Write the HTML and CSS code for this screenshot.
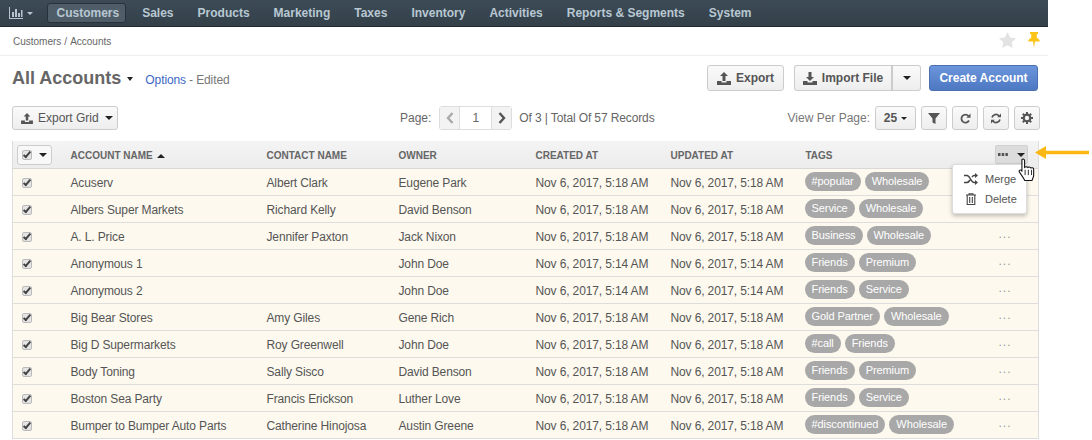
FILE: index.html
```html
<!DOCTYPE html>
<html lang="en" dir="ltr">
  <head>
    <meta charset="utf-8">
    <title>All Accounts</title>
    <link rel="stylesheet" href="styles.css">
  </head>
  <body>
    <div class="page">
      <nav class="topnav">
        <a class="nav-chart">
          <svg width="14" height="12" viewBox="0 0 14 12"><path d="M0 0h1v11h13v1H0zM3 5h2v5H3zM6 2h2v8H6zM9 6h2v4H9zM12 3h1.500v7H12z" fill="#b5c4d0"/></svg>
          <i class="caret caret-nav"></i>
        </a>
        <a class="nav-item active">Customers</a>
        <a class="nav-item">Sales</a>
        <a class="nav-item">Products</a>
        <a class="nav-item">Marketing</a>
        <a class="nav-item">Taxes</a>
        <a class="nav-item">Inventory</a>
        <a class="nav-item">Activities</a>
        <a class="nav-item">Reports &amp; Segments</a>
        <a class="nav-item">System</a>
      </nav>

      <div class="crumbs">
        <div class="crumb-text"><span>Customers</span><span>/</span><span>Accounts</span></div>
        <div class="crumb-icons">
          <svg width="17" height="16" viewBox="0 0 17 16"><path d="M8.500 0l2.600 5.400 5.900.8-4.300 4.100 1 5.700-5.200-2.800-5.200 2.800 1-5.700L0 6.200l5.900-.8z" fill="#e3e3e3"/></svg>
          <svg width="12" height="16" viewBox="0 0 12 16"><path d="M2 0h8v2H8.800v4c1.600.5 3 1.500 3 3.500H7L6 16 5 9.500H.2c0-2 1.400-3 3-3.500V2H2z" fill="#fcc419"/></svg>
        </div>
      </div>

      <div class="titlebar">
        <div class="title-left">
          <h1>All Accounts</h1>
          <i class="caret caret-title"></i>
          <a class="options">Options</a>
          <span class="edited">- Edited</span>
        </div>
        <div class="title-right">
          <button class="btn btn-export">
            <svg class="ico" width="14" height="13" viewBox="0 0 14 13"><path d="M7 0l4 4H8.500v5h-3V4H3zM0 9h4.500v1.500h5V9H14v4H0z" fill="#555"/></svg>
            Export
          </button>
          <div class="btn-group">
            <button class="btn btn-import">
              <svg class="ico" width="14" height="13" viewBox="0 0 14 13"><path d="M5.500 0h3v5H11L7 9 3 5h2.500zM0 9h4.500v1.500h5V9H14v4H0z" fill="#555"/></svg>
              Import File
            </button>
            <button class="btn btn-split"><i class="caret"></i></button>
          </div>
          <button class="btn btn-primary">Create Account</button>
        </div>
      </div>

      <div class="toolbar">
        <button class="btn btn-small btn-grid">
          <svg class="ico" width="12" height="11" viewBox="0 0 14 13"><path d="M7 0l4 4H8.500v5h-3V4H3zM0 9h4.500v1.500h5V9H14v4H0z" fill="#555"/></svg>
          Export Grid
          <i class="caret caret-grid"></i>
        </button>
        <div class="pager">
          <span>Page:</span>
          <div class="pager-box">
            <span class="pager-arrow">
              <svg width="8" height="12" viewBox="0 0 8 12"><path d="M6.500 1L2 6l4.500 5" fill="none" stroke="#aaa" stroke-width="2.400"/></svg>
            </span>
            <span class="pager-num">1</span>
            <span class="pager-arrow">
              <svg width="8" height="12" viewBox="0 0 8 12"><path d="M1.500 1L6 6l-4.500 5" fill="none" stroke="#555" stroke-width="2.400"/></svg>
            </span>
          </div>
          <span class="pager-total">Of 3 | Total Of 57 Records</span>
        </div>
        <div class="view-tools">
          <span class="view-label">View Per Page:</span>
          <button class="btn btn-small btn-per"><b>25</b><i class="caret caret-small"></i></button>
          <button class="btn btn-small btn-icon">
            <svg width="12" height="11" viewBox="0 0 12 11"><path d="M0 0h12L7.500 5.500V11l-3-1.500v-4z" fill="#555"/></svg>
          </button>
          <button class="btn btn-small btn-icon">
            <svg width="11" height="11" viewBox="0 0 11 11"><path d="M9 7.500A4 4 0 1 1 8.500 3" fill="none" stroke="#555" stroke-width="1.800"/><path d="M10.500 .5v4.200H6.300z" fill="#555"/></svg>
          </button>
          <button class="btn btn-small btn-icon">
            <svg width="12" height="11" viewBox="0 0 12 11"><path d="M2 4.500A4 4 0 0 1 9 3M10 6.500A4 4 0 0 1 3 8" fill="none" stroke="#555" stroke-width="1.700"/><path d="M11 .5v3.800H7.200zM1 10.500V6.700h3.800z" fill="#555"/></svg>
          </button>
          <button class="btn btn-small btn-icon">
            <svg width="12" height="12" viewBox="0 0 12 12"><circle cx="6" cy="6" r="3.300" fill="none" stroke="#555" stroke-width="2.200"/><path d="M6 0v2.500M6 9.500V12M0 6h2.500M9.500 6H12M1.800 1.800l1.800 1.800M8.400 8.400l1.800 1.800M1.800 10.200l1.800-1.800M8.400 3.600l1.800-1.800" stroke="#555" stroke-width="2"/></svg>
          </button>
        </div>
      </div>

      <div class="grid-wrap">
        <table class="grid">
          <colgroup>
            <col class="c-check"><col class="c-name"><col class="c-contact"><col class="c-owner">
            <col class="c-date"><col class="c-date"><col class="c-tags"><col class="c-more">
          </colgroup>
          <thead>
            <tr>
              <th class="check-cell">
                <span class="check-head"><span class="check"></span><i class="caret"></i></span>
              </th>
              <th>ACCOUNT NAME <i class="caret caret-up"></i></th>
              <th>CONTACT NAME</th>
              <th>OWNER</th>
              <th>CREATED AT</th>
              <th>UPDATED AT</th>
              <th>TAGS</th>
              <th class="more-cell">
                <span class="more-btn">
                  <svg width="10" height="3" viewBox="0 0 10 3"><path d="M0 0h2.500v3H0zM3.700 0h2.500v3H3.700zM7.400 0h2.500v3H7.400z" fill="#555"/></svg>
                  <i class="caret"></i>
                </span>
              </th>
            </tr>
          </thead>
          <tbody>
            <tr><td class="check-cell"><span class="check"></span></td><td>Acuserv</td><td>Albert Clark</td><td>Eugene Park</td><td>Nov 6, 2017, 5:18 AM</td><td>Nov 6, 2017, 5:18 AM</td><td class="tags"><span class="tag">#popular</span><span class="tag">Wholesale</span></td><td class="dots"></td></tr>
            <tr><td class="check-cell"><span class="check"></span></td><td>Albers Super Markets</td><td>Richard Kelly</td><td>David Benson</td><td>Nov 6, 2017, 5:18 AM</td><td>Nov 6, 2017, 5:18 AM</td><td class="tags"><span class="tag">Service</span><span class="tag">Wholesale</span></td><td class="dots"></td></tr>
            <tr><td class="check-cell"><span class="check"></span></td><td>A. L. Price</td><td>Jennifer Paxton</td><td>Jack Nixon</td><td>Nov 6, 2017, 5:18 AM</td><td>Nov 6, 2017, 5:18 AM</td><td class="tags"><span class="tag">Business</span><span class="tag">Wholesale</span></td><td class="dots">...</td></tr>
            <tr><td class="check-cell"><span class="check"></span></td><td>Anonymous 1</td><td></td><td>John Doe</td><td>Nov 6, 2017, 5:14 AM</td><td>Nov 6, 2017, 5:14 AM</td><td class="tags"><span class="tag">Friends</span><span class="tag">Premium</span></td><td class="dots">...</td></tr>
            <tr><td class="check-cell"><span class="check"></span></td><td>Anonymous 2</td><td></td><td>John Doe</td><td>Nov 6, 2017, 5:14 AM</td><td>Nov 6, 2017, 5:14 AM</td><td class="tags"><span class="tag">Friends</span><span class="tag">Service</span></td><td class="dots">...</td></tr>
            <tr><td class="check-cell"><span class="check"></span></td><td>Big Bear Stores</td><td>Amy Giles</td><td>Gene Rich</td><td>Nov 6, 2017, 5:18 AM</td><td>Nov 6, 2017, 5:18 AM</td><td class="tags"><span class="tag">Gold Partner</span><span class="tag">Wholesale</span></td><td class="dots">...</td></tr>
            <tr><td class="check-cell"><span class="check"></span></td><td>Big D Supermarkets</td><td>Roy Greenwell</td><td>John Doe</td><td>Nov 6, 2017, 5:18 AM</td><td>Nov 6, 2017, 5:18 AM</td><td class="tags"><span class="tag">#call</span><span class="tag">Friends</span></td><td class="dots">...</td></tr>
            <tr><td class="check-cell"><span class="check"></span></td><td>Body Toning</td><td>Sally Sisco</td><td>David Benson</td><td>Nov 6, 2017, 5:18 AM</td><td>Nov 6, 2017, 5:18 AM</td><td class="tags"><span class="tag">Friends</span><span class="tag">Premium</span></td><td class="dots">...</td></tr>
            <tr><td class="check-cell"><span class="check"></span></td><td>Boston Sea Party</td><td>Francis Erickson</td><td>Luther Love</td><td>Nov 6, 2017, 5:18 AM</td><td>Nov 6, 2017, 5:18 AM</td><td class="tags"><span class="tag">Friends</span><span class="tag">Service</span></td><td class="dots">...</td></tr>
            <tr><td class="check-cell"><span class="check"></span></td><td>Bumper to Bumper Auto Parts</td><td>Catherine Hinojosa</td><td>Austin Greene</td><td>Nov 6, 2017, 5:18 AM</td><td>Nov 6, 2017, 5:18 AM</td><td class="tags"><span class="tag">#discontinued</span><span class="tag">Wholesale</span></td><td class="dots">...</td></tr>
          </tbody>
        </table>

        <div class="more-menu">
          <div class="menu-row">
            <svg width="14" height="12" viewBox="0 0 14 12"><path d="M0 2.500h3c3 0 4 7 7 7h1.500M0 9.500h3c1.300 0 2.200-1.200 3-2.500M8 4c.6-.8 1.200-1.500 2-1.500h1.500" fill="none" stroke="#444" stroke-width="1.500"/><path d="M11 0l3 2.500L11 5zM11 7l3 2.500L11 12z" fill="#444"/></svg>
            Merge
          </div>
          <div class="menu-row">
            <svg width="14" height="12" viewBox="0 0 14 12"><path d="M2 2h10M5 2V.7h4V2M3.200 2.500v9h7.600v-9M5.700 4v6M8.300 4v6" fill="none" stroke="#444" stroke-width="1.100"/></svg>
            Delete
          </div>
        </div>

        <svg class="hand" width="18" height="23" viewBox="1 0 15.500 21.500"><path d="M4 1.500c1-1 2.500-.5 2.500 1V9c.5-1 2.500-1 3 0 .5-.8 2.300-.8 2.800.4.800-.6 2.700-.3 2.700 1.300V16c0 2-1 3-1.500 5H6.500c-.5-2-3-5-5-8-.6-1 .5-2.300 2-1.500l.5 1z" fill="#fff" stroke="#111" stroke-width="1" stroke-linejoin="round"/><path d="M7 11v5M10 11v5M13 11v5" stroke="#111" stroke-width=".8"/></svg>

        <svg class="arrow" width="54" height="13" viewBox="0 0 54 13"><path d="M0 6.500L11 0v4.800h43v3.400H11V13z" fill="#fbb714"/></svg>
      </div>
    </div>
  </body>
</html>
```

FILE: styles.css
```css
html, body {
  margin: 0;
  padding: 0;
  background: #fff;
  overflow: hidden;
}
body {
  font-family: "Liberation Sans", Arial, sans-serif;
  font-size: 12px;
  color: #555;
}
.page {
  width: 1048px;
}

/* top nav */
.topnav {
  display: flex;
  align-items: center;
  height: 26px;
  padding-left: 9px;
  background: linear-gradient(#3d4b56, #33404a);
  border-bottom: 1px solid #20292f;
}
.nav-chart {
  display: flex;
  align-items: center;
  gap: 4px;
  width: 38px;
}
.nav-item {
  padding: 0 11.500px;
  margin-right: 1px;
  font-weight: bold;
  font-size: 12px;
  line-height: 18px;
  color: #b8c8d3;
}
.nav-item.active {
  background: #4f5d68;
  border: 1px solid #28323a;
  border-radius: 3px;
  padding: 0 6px 0 8.500px;
  margin-right: 4.500px;
}

.caret {
  display: inline-block;
  width: 0;
  height: 0;
  border-left: 4px solid transparent;
  border-right: 4px solid transparent;
  border-top: 4px solid #222;
}
.caret-nav {
  border-left-width: 3px;
  border-right-width: 3px;
  border-top: 3px solid #b8c8d3;
}
.caret-up {
  border-top: 0;
  border-bottom: 4px solid #222;
  margin-left: 1px;
  vertical-align: 1px;
}

/* breadcrumb row */
.crumbs {
  display: flex;
  justify-content: space-between;
  align-items: center;
  height: 27px;
  padding: 1px 8px 0 13px;
  border-bottom: 1px solid #eee;
  font-size: 10px;
  color: #666;
}
.crumb-text {
  display: flex;
  gap: 3px;
}
.crumb-icons {
  display: flex;
  align-items: center;
  gap: 12px;
  margin-bottom: 3px;
}

/* title row */
.titlebar {
  display: flex;
  justify-content: space-between;
  align-items: center;
  height: 44px;
  padding: 0 10px 0 12px;
}
.title-left {
  display: flex;
  align-items: center;
}
h1 {
  margin: 0;
  font-size: 18px;
  font-weight: bold;
  color: #666;
}
.caret-title {
  margin: 2px 12px 0 6px;
  border-left-width: 3.500px;
  border-right-width: 3.500px;
}
.options {
  margin: 4px 3px 0 0;
  letter-spacing: -.1px;
  color: #3b68c4;
}
.edited {
  margin-top: 4px;
  letter-spacing: -.1px;
  color: #777;
}
.title-right {
  display: flex;
  gap: 8px;
}
.btn {
  display: inline-flex;
  align-items: center;
  justify-content: center;
  height: 26px;
  padding: 0 10px;
  font-family: inherit;
  font-size: 12px;
  font-weight: bold;
  white-space: nowrap;
  color: #555;
  background: linear-gradient(#fafafa, #eee);
  border: 1px solid #ccc;
  border-radius: 3px;
}
.ico {
  flex-shrink: 0;
  margin-right: 5px;
}
.btn-export {
  width: 77px;
  margin-right: 2px;
}
.btn-group { display: flex; }
.btn-import {
  width: 99px;
  padding: 0;
  border-radius: 3px 0 0 3px;
  border-right-width: 2px;
}
.btn-split {
  width: 28px;
  padding: 0;
  border-left: 0;
  border-radius: 0 3px 3px 0;
}
.btn-primary {
  width: 109px;
  padding: 0;
  color: #fff;
  background: linear-gradient(#6b96dc, #4d78c2);
  border-color: #4a70b0;
}

/* toolbar */
.toolbar {
  display: flex;
  align-items: center;
  height: 24px;
  margin-top: 6px;
  padding: 0 12px;
  margin-bottom: 11px;
}
.btn-small {
  height: 24px;
  padding: 0 8px;
  font-weight: normal;
}
.btn-grid {
  width: 106px;
  padding-right: 3px;
  justify-content: flex-start;
}
.caret-grid {
  flex-shrink: 0;
  margin-left: 6px;
}
.pager {
  display: flex;
  align-items: center;
  gap: 8px;
  margin-left: 282px;
  color: #666;
}
.pager-total {
  margin-left: -1px;
  letter-spacing: -.12px;
}
.pager-box {
  display: flex;
  height: 22px;
  border: 1px solid #ddd;
  border-radius: 3px;
}
.pager-arrow {
  display: flex;
  align-items: center;
  justify-content: center;
  width: 19px;
  background: #f3f3f3;
}
.pager-num {
  width: 31px;
  text-align: center;
  line-height: 22px;
  border-left: 1px solid #ddd;
  border-right: 1px solid #ddd;
}
.view-tools {
  display: flex;
  align-items: center;
  gap: 5px;
  margin-left: auto;
  margin-right: -4px;
}
.view-label {
  color: #777;
}
.btn-per {
  width: 41px;
  padding: 0;
  gap: 4px;
}
.caret-small {
  border-left-width: 3px;
  border-right-width: 3px;
  border-top-width: 3px;
}
.btn-icon {
  width: 26px;
  padding: 0;
}

/* table */
.grid-wrap {
  position: relative;
  margin-left: 12px;
  width: 1027px;
}
.grid {
  width: 1027px;
  table-layout: fixed;
  border-collapse: collapse;
  border-left: 1px solid #ddd;
  border-right: 1px solid #ddd;
}
.c-check { width: 47px; }
.c-name { width: 196px; }
.c-contact { width: 132px; }
.c-owner { width: 137px; }
.c-date { width: 135px; }
.c-tags { width: 190px; }
th {
  height: 25px;
  padding: 2px 0 0 11px;
  text-align: left;
  font-size: 10px;
  font-weight: bold;
  color: #666;
  background: linear-gradient(#f4f4f4, #ececec);
  border-bottom: 1px solid #d8d8d8;
}
td {
  height: 24px;
  padding: 2px 0 0 11px;
  background: #fdf9ee;
  border-bottom: 1px solid #ddd;
  color: #555;
  letter-spacing: -.13px;
  white-space: nowrap;
}
th.check-cell, th.more-cell {
  padding-top: 0;
  height: 27px;
}
td.check-cell {
  padding-top: 0;
  height: 26px;
}
.check-cell {
  padding-left: 9px;
}
.check {
  display: inline-block;
  position: relative;
  width: 8px;
  height: 8px;
  background: #e4e4e4;
  border: 1px solid #bbb;
  border-radius: 2px;
  vertical-align: middle;
}
.check::after {
  content: "";
  position: absolute;
  left: 2px;
  top: -1px;
  width: 2px;
  height: 6px;
  border: solid #444;
  border-width: 0 2px 2px 0;
  transform: rotate(40deg);
}
.check-head {
  display: inline-flex;
  box-sizing: border-box;
  align-items: center;
  justify-content: space-between;
  width: 35px;
  height: 20px;
  margin-left: -5px;
  padding: 0 4px 0 4px;
  background: #f8f8f8;
  border: 1px solid #ccc;
  border-radius: 3px;
  vertical-align: middle;
}
td.tags {
  height: 23px;
  padding: 3px 0 0 10px;
  vertical-align: top;
  letter-spacing: -.08px;
}
.tag {
  display: inline-block;
  height: 19px;
  line-height: 19px;
  padding: 0 7px;
  margin-right: 4px;
  font-size: 11px;
  color: #fff;
  background: #a8a8a8;
  border-radius: 10px;
}
td.dots {
  height: 22px;
  padding: 0 0 4px 14px;
  color: #999;
  letter-spacing: 1px;
}
th.more-cell {
  padding-left: 10px;
}
.more-btn {
  display: inline-flex;
  box-sizing: border-box;
  align-items: center;
  justify-content: space-between;
  width: 33px;
  height: 19px;
  padding: 0 2px;
  background: #dcdcdc;
  border: 1px solid #d0d0d0;
  border-radius: 2px;
  vertical-align: middle;
}

/* overlays */
.more-menu {
  position: absolute;
  left: 940px;
  top: 23px;
  width: 73px;
  padding: 4px 0;
  background: #fff;
  border: 1px solid #ddd;
  border-radius: 3px;
  box-shadow: 0 2px 4px rgba(0, 0, 0, .25);
  font-size: 11px;
}
.menu-row {
  display: flex;
  align-items: center;
  gap: 7px;
  height: 20px;
  padding-left: 11px;
}
.hand {
  position: absolute;
  left: 1006px;
  top: 17px;
}
.arrow {
  position: absolute;
  left: 1023px;
  top: 5px;
}
```
